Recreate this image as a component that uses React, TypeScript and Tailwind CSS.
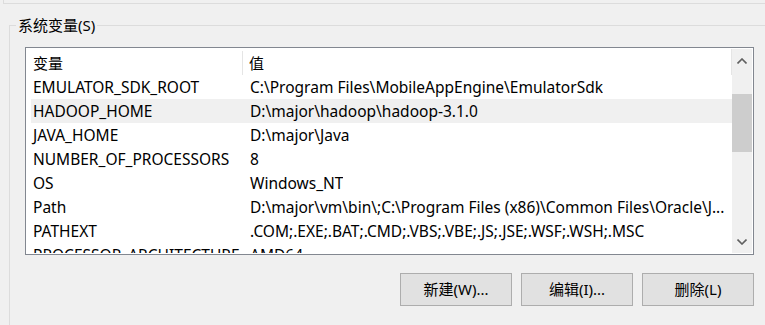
import React from "react";

const rows: { name: string; value: string; hover?: boolean }[] = [
  { name: "EMULATOR_SDK_ROOT", value: "C:\\Program Files\\MobileAppEngine\\EmulatorSdk" },
  { name: "HADOOP_HOME", value: "D:\\major\\hadoop\\hadoop-3.1.0", hover: true },
  { name: "JAVA_HOME", value: "D:\\major\\Java" },
  { name: "NUMBER_OF_PROCESSORS", value: "8" },
  { name: "OS", value: "Windows_NT" },
  { name: "Path", value: "D:\\major\\vm\\bin\\;C:\\Program Files (x86)\\Common Files\\Oracle\\J..." },
  { name: "PATHEXT", value: ".COM;.EXE;.BAT;.CMD;.VBS;.VBE;.JS;.JSE;.WSF;.WSH;.MSC" },
  { name: "PROCESSOR_ARCHITECTURE", value: "AMD64" },
];

function Chevron({ up }: { up?: boolean }) {
  return (
    <svg width="10" height="6" viewBox="0 0 10 6" className={up ? "" : "rotate-180"}>
      <path d="M0.5 5.5 L5 1 L9.5 5.5" fill="none" stroke="#606060" strokeWidth="1.6" />
    </svg>
  );
}

export default function App() {
  return (
    <div className="w-[765px] h-[325px] overflow-hidden bg-[#f0f0f0] text-[15px] text-black font-['Noto_Sans','Noto_Sans_CJK_SC',sans-serif]">
      {/* upper group box edge */}
      <div className="ml-[3px] h-[4px] border-l border-b border-[#dcdcdc]" />

      <fieldset className="ml-[9px] mt-[11px] w-[800px] h-[400px] border border-[#dcdcdc]">
        <legend className="ml-[6px] px-[2px] leading-[20px]">系统变量(S)</legend>

        {/* list view */}
        <div className="ml-[15px] mt-[12px] w-[729px] h-[208px] border border-[#828790] bg-white p-[1px] flex">
          <div className="flex-1 overflow-hidden flex flex-col">
            <div className="h-[26px] shrink-0 flex items-center pt-[2px] border-r border-[#e5e5e5]">
              <div className="w-[216px] h-full pl-[6px] flex items-center border-r border-[#e5e5e5]">变量</div>
              <div className="pl-[6px]">值</div>
            </div>
            {rows.map((r) => (
              <div
                key={r.name}
                className={`ml-[4px] h-[24px] shrink-0 flex items-center pt-[2px] whitespace-nowrap text-[15.5px] ${r.hover ? "bg-[#f0f0f0]" : ""}`}
              >
                <div className="w-[217px] shrink-0 pl-[2px] overflow-hidden">{r.name}</div>
                <div className="pl-[2px] min-w-0 overflow-hidden">{r.value}</div>
              </div>
            ))}
          </div>

          {/* scrollbar */}
          <div className="w-[20px] bg-[#f0f0f0] flex flex-col">
            <div className="h-[23px] flex items-center justify-center">
              <Chevron up />
            </div>
            <div className="flex-1">
              <div className="mt-[22px] h-[58px] bg-[#cdcdcd]" />
            </div>
            <div className="h-[23px] flex items-center justify-center">
              <Chevron />
            </div>
          </div>
        </div>

        {/* buttons */}
        <div className="ml-[15px] mt-[18px] w-[729px] flex justify-end gap-[9px]">
          <button className="w-[112px] h-[33px] bg-[#e1e1e1] border border-[#adadad]">新建(W)...</button>
          <button className="w-[112px] h-[33px] bg-[#e1e1e1] border border-[#adadad]">编辑(I)...</button>
          <button className="w-[112px] h-[33px] bg-[#e1e1e1] border border-[#adadad]">删除(L)</button>
        </div>
      </fieldset>
    </div>
  );
}
